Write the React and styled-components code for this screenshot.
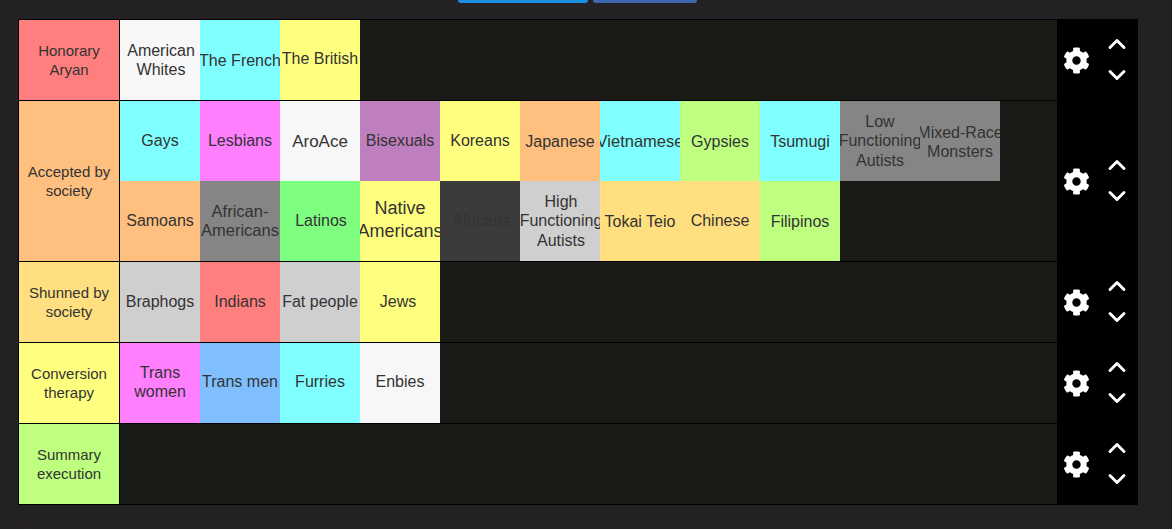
import React from "react";
import styled, { createGlobalStyle } from "styled-components";
import { FaCog } from "react-icons/fa";
import { LuChevronUp, LuChevronDown } from "react-icons/lu";

const colors = {
  red: "#ff7f7f",
  orange: "#ffbf7f",
  amber: "#ffdf7f",
  yellow: "#ffff7f",
  lime: "#bfff7f",
  green: "#7fff7f",
  cyan: "#7fffff",
  blue: "#7fbfff",
  pink: "#ff7fff",
  purple: "#bf7fbf",
  white: "#f7f7f7",
  silver: "#cfcfcf",
  gray: "#858585",
  dark: "#3b3b3b",
};

// the tier pictures are hand made, so their captions sit a pixel or two off centre: dx, dy
const tiers = [
  {
    label: "Honorary Aryan",
    color: "red",
    items: [
      { name: "American\nWhites", color: "white", dx: 1 },
      { name: "The French", color: "cyan", dy: 1 },
      { name: "The British", color: "yellow", dy: -1 },
    ],
  },
  {
    label: "Accepted by society",
    color: "orange",
    items: [
      { name: "Gays", color: "cyan" },
      { name: "Lesbians", color: "pink" },
      { name: "AroAce", color: "white", size: 17, dy: 1 },
      { name: "Bisexuals", color: "purple" },
      { name: "Koreans", color: "yellow" },
      { name: "Japanese", color: "orange", dy: 1 },
      { name: "Vietnamese", color: "cyan", size: 16.5, dy: 1 },
      { name: "Gypsies", color: "lime", dy: 1 },
      { name: "Tsumugi", color: "cyan", dy: 1 },
      { name: "Low\nFunctioning\nAutists", color: "gray" },
      { name: "Mixed-Race\nMonsters", color: "gray", dy: 1 },
      { name: "Samoans", color: "orange" },
      { name: "African-\nAmericans", color: "gray", size: 16.5 },
      { name: "Latinos", color: "green", dx: 1 },
      { name: "Native\nAmericans", color: "yellow", size: 18, dy: -1 },
      { name: "Africans", color: "dark", dx: 1 },
      { name: "High\nFunctioning\nAutists", color: "silver", dx: 1 },
      { name: "Tokai Teio", color: "amber", dy: 1 },
      { name: "Chinese", color: "amber" },
      { name: "Filipinos", color: "lime", dy: 1 },
    ],
  },
  {
    label: "Shunned by society",
    color: "amber",
    items: [
      { name: "Braphogs", color: "silver" },
      { name: "Indians", color: "red" },
      { name: "Fat people", color: "silver" },
      { name: "Jews", color: "yellow", dx: -2 },
    ],
  },
  {
    label: "Conversion therapy",
    color: "yellow",
    items: [
      { name: "Trans\nwomen", color: "pink", dy: -1 },
      { name: "Trans men", color: "blue", dy: -1 },
      { name: "Furries", color: "cyan", dy: -1 },
      { name: "Enbies", color: "white", dy: -1 },
    ],
  },
  { label: "Summary execution", color: "lime", items: [] },
];

const GlobalStyle = createGlobalStyle`
  html, body {
    margin: 0;
    height: 100%;
    background: #232123;
    overflow: hidden;
  }
`;

const Page = styled.div`
  width: 1120px;
  padding-left: 18px;
  font-family: "Liberation Sans", Arial, sans-serif;
`;

const ButtonBar = styled.div`
  display: flex;
  justify-content: center;
  gap: 5px;
  height: 3px;
  margin-bottom: 16px;
  padding-right: 2px;
`;

const TopButton = styled.div`
  width: ${(p) => p.$width}px;
  background: ${(p) => p.$color};
  border-radius: 0 0 4px 4px;
`;

const Board = styled.div`
  border-top: 1px solid #000;
`;

const Row = styled.div`
  display: flex;
  border-bottom: 1px solid #000;
  background: #1a1a17;
`;

const Label = styled.div`
  flex: none;
  width: 102px;
  box-sizing: border-box;
  padding: 0 8px;
  display: flex;
  align-items: center;
  justify-content: center;
  text-align: center;
  border-left: 1px solid #000;
  border-right: 1px solid #000;
  background: ${(p) => colors[p.$color]};
  color: #333;
  font-size: 15px;
  line-height: 19px;
`;

const Items = styled.div`
  flex: 1;
  display: flex;
  flex-wrap: wrap;
  align-content: flex-start;
  min-height: 80px;
`;

const Item = styled.div`
  width: 80px;
  height: 80px;
  box-sizing: border-box;
  display: flex;
  align-items: center;
  justify-content: center;
  text-align: center;
  white-space: pre;
  overflow: hidden;
  padding-left: ${(p) => Math.max(p.$dx || 0, 0) * 2}px;
  padding-right: ${(p) => Math.max(-(p.$dx || 0), 0) * 2}px;
  padding-top: ${(p) => Math.max(p.$dy || 0, 0) * 2}px;
  padding-bottom: ${(p) => Math.max(-(p.$dy || 0), 0) * 2}px;
  background: ${(p) => colors[p.$color]};
  color: #333;
  font-size: ${(p) => p.$size || 16}px;
  line-height: ${(p) => (p.$size === 18 ? 23 : 19.5)}px;
`;

const Controls = styled.div`
  flex: none;
  width: 81px;
  margin-bottom: -1px;
  display: flex;
  align-items: center;
  background: #000;
  color: #fff;
`;

const Gear = styled(FaCog)`
  width: 27px;
  height: 27px;
  margin-left: 6px;
`;

const Arrows = styled.div`
  display: flex;
  flex-direction: column;
  align-items: center;
  gap: 3px;
  margin-left: 13px;
  margin-bottom: 2px;
  font-size: 28px;

  svg {
    stroke-width: 2.5;
  }
`;

const Footer = styled.div`
  padding: 22px 0 0 9px;
`;

const FooterMark = styled.div`
  width: 4px;
  height: 2px;
  background: #3a1a1c;
`;

export default function App() {
  return (
    <Page>
      <GlobalStyle />
      <ButtonBar>
        <TopButton $width={130} $color="#1b8fe0" />
        <TopButton $width={104} $color="#3f67b1" />
      </ButtonBar>
      <Board>
        {tiers.map((tier) => (
          <Row key={tier.label}>
            <Label $color={tier.color}>{tier.label}</Label>
            <Items>
              {tier.items.map((item) => (
                <Item
                  key={item.name}
                  $color={item.color}
                  $size={item.size}
                  $dx={item.dx}
                  $dy={item.dy}
                >
                  {item.name}
                </Item>
              ))}
            </Items>
            <Controls>
              <Gear />
              <Arrows>
                <LuChevronUp />
                <LuChevronDown />
              </Arrows>
            </Controls>
          </Row>
        ))}
      </Board>
      <Footer>
        <FooterMark />
      </Footer>
    </Page>
  );
}
